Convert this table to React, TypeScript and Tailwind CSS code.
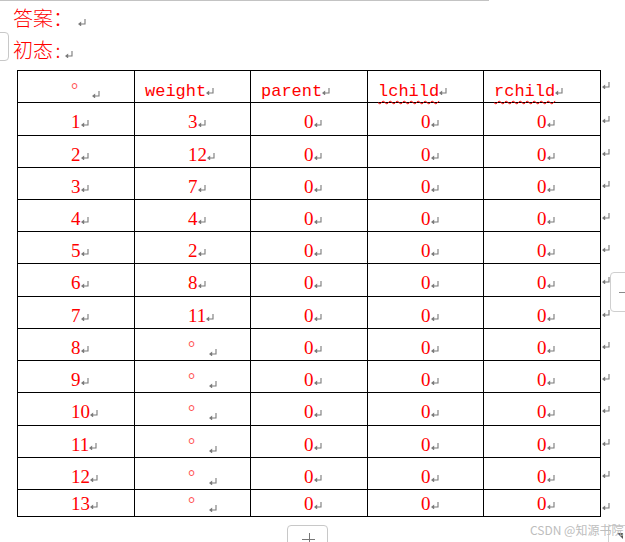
import React from "react"

// Word-style paragraph mark
const Mark = ({ className = "inline-block" }: { className?: string }) => (
  <svg width="8" height="7" viewBox="0 0 8 7" className={className}>
    <path d="M7 0 V5 H2.5" stroke="#7a7a7a" strokeWidth="1.1" fill="none" />
    <path d="M0 5 L3.2 2.4 V7.6 Z" fill="#7a7a7a" />
  </svg>
)

const rowHeights = ["h-[33px]", "h-[33px]", "h-[32px]", "h-[32px]", "h-[32px]", "h-[32px]", "h-[33px]", "h-[32px]", "h-[32px]", "h-[32px]", "h-[33px]", "h-[32px]", "h-[32px]", "h-[27px]"]
const colWidths = ["w-[117px]", "w-[116px]", "w-[117px]", "w-[116px]", "w-[117px]"]

const weights = ["3", "12", "7", "4", "2", "8", "11", null, null, null, null, null, null]

const serif = "font-['Liberation_Serif',serif]"
const mono = "font-['Liberation_Mono',monospace]"

const Degree = () => (
  <>
    <span className="text-[18px] text-[#ff5050] align-[3px]">°</span>
    <Mark className="inline-block ml-[14px]" />
  </>
)

const Num = ({ v }: { v: string }) => (
  <>
    <span className="text-[#ff0000]">{v}</span>
    <Mark />
  </>
)

export default function App() {
  const headers = ["weight", "parent", "lchild", "rchild"]

  return (
    <div className="relative w-[625px] h-[542px] overflow-hidden bg-white">
      <div className="h-px w-[489px] bg-[#c3c3c3]" />

      <div className="pl-[13px] pt-[1px] text-[20px] font-light text-[#ff0000] font-['Noto_Sans_CJK_SC',sans-serif]">
        <div className="h-[32px] leading-[32px] flex items-baseline">
          <span>答案：</span>
          <Mark className="inline-block ml-[5px]" />
        </div>
        <div className="h-[32px] leading-[32px] flex items-baseline">
          <span>初态</span>
          <span className="inline-block w-[10px] text-center">:</span>
          <Mark className="inline-block ml-[2px]" />
        </div>
      </div>

      <div className="mt-[4px] pl-[17px]">
        {rowHeights.map((h, r) => {
          const last = r === rowHeights.length - 1
          const pad = last ? "pt-[4px]" : "pt-[9px]"
          return (
            <div key={r} className="flex">
              <div className={`flex border-l border-b border-black ${r === 0 ? "border-t" : ""} ${h}`}>
                {colWidths.map((w, c) => {
                  let content: React.ReactNode
                  let pl = "pl-[53px]"
                  if (r === 0) {
                    if (c === 0) {
                      content = <Degree />
                    } else {
                      pl = "pl-[10px]"
                      const t = headers[c - 1]
                      const wavy = c >= 3
                      content = (
                        <>
                          <span
                            className={`${mono} text-[17px] text-[#ff0000] ${
                              wavy ? "underline decoration-wavy decoration-[#ff0000] decoration-1 underline-offset-[4px]" : ""
                            }`}
                          >
                            {t}
                          </span>
                          <Mark />
                        </>
                      )
                    }
                  } else if (c === 0) {
                    content = <Num v={String(r)} />
                  } else if (c === 1) {
                    const wv = weights[r - 1]
                    content = wv ? <Num v={wv} /> : <Degree />
                  } else {
                    content = <Num v="0" />
                  }
                  return (
                    <div
                      key={c}
                      className={`${w} border-r border-black ${pl} ${pad} ${serif} text-[19px] leading-[20px] whitespace-nowrap`}
                    >
                      {content}
                    </div>
                  )
                })}
              </div>
              <div className={`ml-[1px] leading-none ${r === 0 ? "pt-[12px]" : "pt-[13px]"}`}>
                <Mark className="block" />
              </div>
            </div>
          )
        })}
      </div>

      {/* editor chrome fragments */}
      <div className="absolute left-[-12px] top-[32px] w-[21px] h-[29px] rounded-[4px] border border-[#c8c8c8]" />
      <div className="absolute left-[610px] top-[272px] w-[30px] h-[40px] rounded-[4px] border border-[#cfcfcf] flex items-center pl-[8px]">
        <div className="h-px w-[8px] bg-[#8a8a8a]" />
      </div>
      <div className="absolute left-[287px] top-[525px] w-[41px] h-[30px] rounded-[4px] border border-[#c8c8c8]">
        <div className="absolute left-[21px] top-[7px] w-px h-[12px] bg-[#777]" />
        <div className="absolute left-[14px] top-[13px] w-[13px] h-px bg-[#777]" />
      </div>
      <div className="absolute left-[608px] top-[525px] w-[30px] h-[30px] rounded-[3px] border border-[#d0d0d0]">
        <svg width="6" height="6" viewBox="0 0 6 6" className="absolute left-[8px] top-[7px]">
          <path d="M0 0 H6 V6 Z" fill="#555" />
        </svg>
      </div>
      <div className="absolute left-[530px] top-[522px] text-[12px] leading-[16px] text-[#bdbdbd] font-['Noto_Sans_CJK_SC',sans-serif] whitespace-nowrap">
        CSDN @知源书院
      </div>
    </div>
  )
}
